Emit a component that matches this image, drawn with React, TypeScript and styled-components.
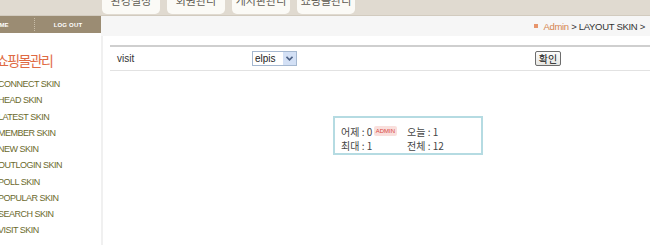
import React from "react";
import styled, { createGlobalStyle } from "styled-components";

const Global = createGlobalStyle`
  html, body { margin: 0; padding: 0; background: #fff; }
  body { width: 650px; height: 245px; overflow: hidden; font-family: "Liberation Sans", "Noto Sans CJK KR", sans-serif; }
`;

const Page = styled.div`
  width: 650px;
  height: 245px;
  overflow: hidden;
  display: flex;
  flex-direction: column;
`;

const Header = styled.div`
  height: 15px;
  background: #e0dad0;
  border-bottom: 1px solid #d2cbbf;
  display: flex;
  align-items: flex-end;
  overflow: hidden;
`;

const Brand = styled.div`
  width: 102px;
  align-self: flex-start;
  margin-top: -9px;
  padding-left: 6px;
  box-sizing: border-box;
  font-size: 10px;
  color: #9a9288;
  letter-spacing: 0.3px;
`;

const Tabs = styled.div`
  display: flex;
  gap: 7px;
  align-self: stretch;
`;

const Tab = styled.div`
  width: 58px;
  height: 14px;
  background: #fbfaf6;
  border-radius: 0 0 5px 5px;
  display: flex;
  justify-content: center;
  align-items: flex-end;
  font-family: "Noto Sans CJK KR", sans-serif;
  font-size: 11px;
  line-height: 11px;
  color: #5e5a52;
  overflow: hidden;
  padding-bottom: 8px;
  box-sizing: border-box;
`;

const Body = styled.div`
  flex: 1;
  display: flex;
`;

const Sidebar = styled.div`
  width: 101px;
  flex: none;
  display: flex;
  flex-direction: column;
`;

const UserBar = styled.div`
  height: 17px;
  background: #9b8c73;
  display: flex;
  align-items: center;
  font-size: 6px;
  font-weight: bold;
  color: #fff;
  letter-spacing: 0.2px;
`;

const UserLink = styled.div<{ $w: number; $align: string }>`
  width: ${(p) => p.$w}px;
  display: flex;
  justify-content: ${(p) => p.$align};
  box-sizing: border-box;
`;

const Sep = styled.div`
  width: 0;
  height: 13px;
  border-left: 1px dotted #c9bea9;
`;

const MenuTitle = styled.div`
  margin: 19px 0 0 -4px;
  font-family: "Noto Sans CJK KR", sans-serif;
  font-size: 14px;
  line-height: 16px;
  letter-spacing: -1.6px;
  color: #df6a43;
  white-space: nowrap;
`;

const MenuList = styled.div`
  margin-top: 8px;
  display: flex;
  flex-direction: column;
`;

const MenuItem = styled.div`
  margin-left: -2px;
  height: 16.25px;
  line-height: 16px;
  font-size: 9px;
  letter-spacing: -0.5px;
  color: #6b6a2c;
  white-space: nowrap;
`;

const Main = styled.div`
  flex: 1;
  display: flex;
  flex-direction: column;
`;

const Crumbs = styled.div`
  height: 20px;
  background: #f6f6f6;
  display: flex;
  align-items: center;
  justify-content: flex-end;
  padding-right: 5px;
  font-size: 9.5px;
  color: #333;
  letter-spacing: -0.3px;
  white-space: nowrap;
`;

const Bullet = styled.span`
  display: inline-block;
  width: 4px;
  height: 4px;
  background: #e7956c;
  margin-right: 5px;
  vertical-align: middle;
`;

const CrumbLink = styled.span`
  color: #d5844f;
`;

const Work = styled.div`
  flex: 1;
  display: flex;
`;

const Strip = styled.div`
  width: 2px;
  background: #f0f0f0;
`;

const Content = styled.div`
  flex: 1;
  padding: 9px 0 0 7px;
  display: flex;
  flex-direction: column;
`;

const Row = styled.div`
  height: 23px;
  border-top: 2px solid #cfcfcf;
  border-bottom: 1px solid #e2e2e2;
  display: flex;
  align-items: center;
  font-size: 10px;
  color: #333;
`;

const Label = styled.div`
  width: 142px;
  padding-left: 7px;
  box-sizing: border-box;
`;

const Select = styled.div`
  width: 45px;
  height: 15px;
  border: 1px solid #a5b8d0;
  box-sizing: border-box;
  display: flex;
  align-items: center;
  font-size: 10px;
  color: #222;
`;

const SelectText = styled.div`
  flex: 1;
  padding-left: 2px;
`;

const SelectArrow = styled.div`
  width: 13px;
  height: 13px;
  background: #d3e0f5;
  display: flex;
  align-items: center;
  justify-content: center;
`;

const Confirm = styled.div`
  margin-left: 238px;
  width: 26px;
  height: 15px;
  border: 1px solid #6d6d6d;
  border-radius: 2px;
  background: linear-gradient(#fbfbfb, #e6e6e2);
  box-sizing: border-box;
  display: flex;
  align-items: center;
  justify-content: center;
  font-family: "Noto Sans CJK KR", sans-serif;
  font-size: 10px;
  color: #111;
`;

const BoxWrap = styled.div`
  padding: 45px 0 0 223px;
`;

const VisitBox = styled.div`
  width: 150px;
  height: 39px;
  border: 2px solid #b5dbe2;
  box-sizing: border-box;
  padding: 6px 0 0 6px;
  display: grid;
  grid-template-columns: 66px auto;
  font-family: "Noto Sans CJK KR", sans-serif;
  font-size: 10px;
  line-height: 11px;
  color: #444;
`;

const Cell = styled.div`
  display: flex;
  align-items: center;
  white-space: nowrap;
`;

const Badge = styled.span`
  margin-left: 2px;
  padding: 0 1.5px;
  height: 10px;
  line-height: 10px;
  background: #f9dfdc;
  border-radius: 2px;
  font-family: "Liberation Sans", sans-serif;
  font-size: 6px;
  color: #d8463e;
`;

const menu = [
  "CONNECT SKIN",
  "HEAD SKIN",
  "LATEST SKIN",
  "MEMBER SKIN",
  "NEW SKIN",
  "OUTLOGIN SKIN",
  "POLL SKIN",
  "POPULAR SKIN",
  "SEARCH SKIN",
  "VISIT SKIN",
];

export default function App() {
  return (
    <Page>
      <Global />
      <Header>
        <Brand>Administrator</Brand>
        <Tabs>
          <Tab>환경설정</Tab>
          <Tab>회원관리</Tab>
          <Tab>게시판관리</Tab>
          <Tab>쇼핑몰관리</Tab>
        </Tabs>
      </Header>
      <Body>
        <Sidebar>
          <UserBar>
            <UserLink $w={34} $align="flex-start">
              <span style={{ marginLeft: -10 }}>HOME</span>
            </UserLink>
            <Sep />
            <UserLink $w={66} $align="center">
              <span>LOG OUT</span>
            </UserLink>
          </UserBar>
          <MenuTitle>쇼핑몰관리</MenuTitle>
          <MenuList>
            {menu.map((m) => (
              <MenuItem key={m}>{m}</MenuItem>
            ))}
          </MenuList>
        </Sidebar>
        <Main>
          <Crumbs>
            <Bullet />
            <CrumbLink>Admin</CrumbLink>
            &nbsp;&gt; LAYOUT SKIN &gt;
          </Crumbs>
          <Work>
            <Strip />
            <Content>
              <Row>
                <Label>visit</Label>
                <Select>
                  <SelectText>elpis</SelectText>
                  <SelectArrow>
                    <svg width="7" height="5" viewBox="0 0 7 5">
                      <path d="M0.5 0.8 L3.5 3.8 L6.5 0.8" stroke="#4d6185" strokeWidth="1.6" fill="none" />
                    </svg>
                  </SelectArrow>
                </Select>
                <Confirm>확인</Confirm>
              </Row>
              <BoxWrap>
                <VisitBox>
                  <Cell>
                    어제 : 0<Badge>ADMIN</Badge>
                  </Cell>
                  <Cell>오늘 : 1</Cell>
                  <Cell>최대 : 1</Cell>
                  <Cell>전체 : 12</Cell>
                </VisitBox>
              </BoxWrap>
            </Content>
          </Work>
        </Main>
      </Body>
    </Page>
  );
}
